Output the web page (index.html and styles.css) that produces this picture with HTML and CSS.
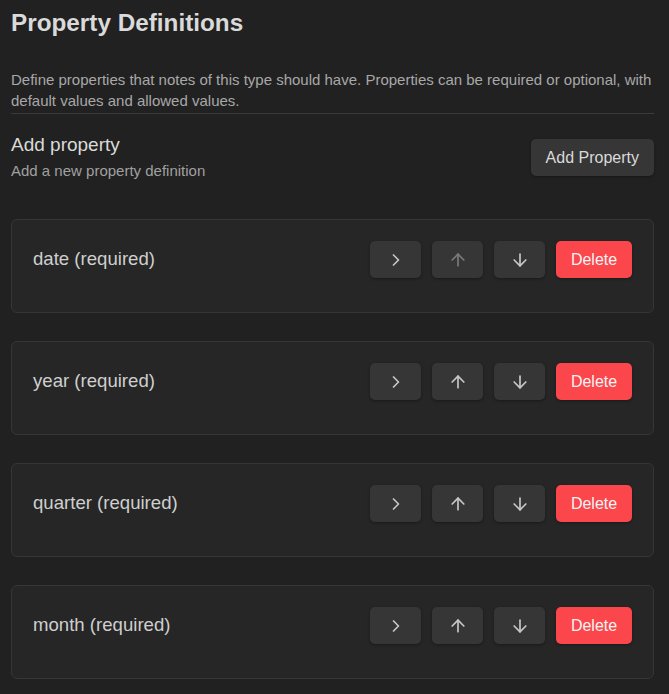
FILE: index.html
```html
<!doctype html>
<html lang="en">
<head>
    <meta charset="UTF-8">
    <title>Property Definitions</title>
    <link rel="stylesheet" href="styles.css">
</head>
<body>

    <div class="page">
        <h2 class="title">Property Definitions</h2>
        <p class="desc">Define properties that notes of this type should have. Properties can be required or optional, with default values and allowed values.</p>

        <div class="setting-row">
            <div class="setting-info">
                <div class="setting-name">Add property</div>
                <div class="setting-sub">Add a new property definition</div>
            </div>
            <button class="btn">Add Property</button>
        </div>

        <div class="prop-list">
            <div class="prop-card">
                <span class="prop-name">date (required)</span>
                <div class="actions">
                    <button class="btn icon-btn"><svg viewBox="0 0 24 24"><path d="m9 18 6-6-6-6"/></svg></button>
                    <button class="btn icon-btn" disabled><svg viewBox="0 0 24 24"><path d="m5 12 7-7 7 7"/><path d="M12 19V5"/></svg></button>
                    <button class="btn icon-btn"><svg viewBox="0 0 24 24"><path d="M12 5v14"/><path d="m19 12-7 7-7-7"/></svg></button>
                    <button class="btn delete-btn">Delete</button>
                </div>
            </div>
            <div class="prop-card">
                <span class="prop-name">year (required)</span>
                <div class="actions">
                    <button class="btn icon-btn"><svg viewBox="0 0 24 24"><path d="m9 18 6-6-6-6"/></svg></button>
                    <button class="btn icon-btn"><svg viewBox="0 0 24 24"><path d="m5 12 7-7 7 7"/><path d="M12 19V5"/></svg></button>
                    <button class="btn icon-btn"><svg viewBox="0 0 24 24"><path d="M12 5v14"/><path d="m19 12-7 7-7-7"/></svg></button>
                    <button class="btn delete-btn">Delete</button>
                </div>
            </div>
            <div class="prop-card">
                <span class="prop-name">quarter (required)</span>
                <div class="actions">
                    <button class="btn icon-btn"><svg viewBox="0 0 24 24"><path d="m9 18 6-6-6-6"/></svg></button>
                    <button class="btn icon-btn"><svg viewBox="0 0 24 24"><path d="m5 12 7-7 7 7"/><path d="M12 19V5"/></svg></button>
                    <button class="btn icon-btn"><svg viewBox="0 0 24 24"><path d="M12 5v14"/><path d="m19 12-7 7-7-7"/></svg></button>
                    <button class="btn delete-btn">Delete</button>
                </div>
            </div>
            <div class="prop-card">
                <span class="prop-name">month (required)</span>
                <div class="actions">
                    <button class="btn icon-btn"><svg viewBox="0 0 24 24"><path d="m9 18 6-6-6-6"/></svg></button>
                    <button class="btn icon-btn"><svg viewBox="0 0 24 24"><path d="m5 12 7-7 7 7"/><path d="M12 19V5"/></svg></button>
                    <button class="btn icon-btn"><svg viewBox="0 0 24 24"><path d="M12 5v14"/><path d="m19 12-7 7-7-7"/></svg></button>
                    <button class="btn delete-btn">Delete</button>
                </div>
            </div>
        </div>
    </div>

</body>
</html>
```

FILE: styles.css
```css
html, body {
    margin: 0;
    padding: 0;
    background-color: #212121;
    color: #dadada;
    font-family: "Liberation Sans", Arial, sans-serif;
}
.page {
    padding: 8px 15px 0 11px;
}
.title {
    margin: 0;
    font-size: 24.3px;
    line-height: 30px;
    font-weight: bold;
    color: #dadada;
}
.desc {
    margin: 32px 0 0 0;
    padding-bottom: 2px;
    font-size: 15px;
    line-height: 20.5px;
    color: #a8a8a8;
    border-bottom: 1px solid #3a3a3a;
}
.setting-row {
    display: flex;
    justify-content: space-between;
    align-items: center;
    padding: 21px 0 0 0;
}
.setting-name {
    font-size: 19px;
    line-height: 20px;
}
.setting-sub {
    margin-top: 7px;
    font-size: 15px;
    line-height: 18px;
    color: #a0a0a0;
}
.btn {
    font-family: inherit;
    font-size: 16px;
    height: 37px;
    padding: 0 15px;
    border: none;
    border-radius: 5px;
    background-color: #363636;
    color: #dadada;
    box-shadow: 0 1px 3px rgba(0, 0, 0, 0.35);
    cursor: pointer;
}
.prop-list {
    display: flex;
    flex-direction: column;
    gap: 28px;
    margin-top: 39px;
}
.prop-card {
    display: flex;
    justify-content: space-between;
    align-items: center;
    padding: 21px 21px 34px 21px;
    border: 1px solid #363636;
    border-radius: 6px;
    background-color: #262626;
}
.prop-name {
    font-size: 18.6px;
    line-height: 22px;
    margin-top: -2px;
    color: #cfcfcf;
}
.actions {
    display: flex;
    gap: 11px;
}
.icon-btn {
    width: 51px;
    display: flex;
    align-items: center;
    justify-content: center;
    padding: 0;
}
.icon-btn svg {
    width: 20px;
    height: 20px;
    fill: none;
    stroke: #c8c8c8;
    stroke-width: 2;
    stroke-linecap: round;
    stroke-linejoin: round;
}
.icon-btn:disabled svg {
    stroke: #7a7a7a;
}
.delete-btn {
    width: 76px;
    padding: 0;
    background-color: #fb464c;
    color: #f4f4f4;
}
```
